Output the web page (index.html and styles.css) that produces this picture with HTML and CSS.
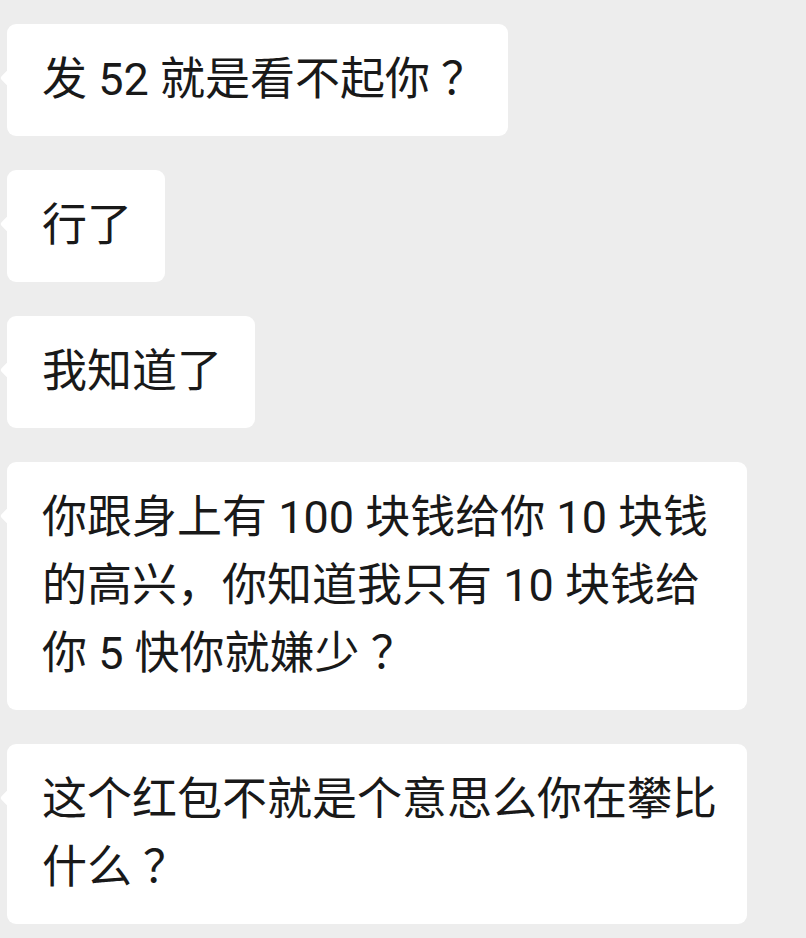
FILE: index.html
```html
<!DOCTYPE html>
<html lang="zh-CN">
<head>
    <meta charset="UTF-8">
    <meta name="viewport" content="width=device-width, initial-scale=1.0">
    <title>聊天记录</title>
    <link rel="stylesheet" href="styles.css">
</head>
<body>
    <!-- 对方发来的消息 -->
    <div class="chat">
        <div class="bubble">发 52 就是看不起你<span class="punct">？</span></div>
        <div class="bubble">行了</div>
        <div class="bubble">我知道了</div>
        <div class="bubble wide">你跟身上有 100 块钱给你 10 块钱<br>的高兴，你知道我只有 10 块钱给<br>你 5 快你就嫌少<span class="punct">？</span></div>
        <div class="bubble wide">这个红包不就是个意思么你在攀比<br>什么<span class="punct">？</span></div>
    </div>
</body>
</html>
```

FILE: styles.css
```css
/* 聊天背景 */
* {
    margin: 0;
    padding: 0;
    box-sizing: border-box;
}

body {
    background-color: #ededed;
    font-family: Roboto, "Noto Sans CJK SC", sans-serif;
    color: #191919;
}

.chat {
    display: flex;
    flex-direction: column;
    align-items: flex-start;
    gap: 34px;
    padding: 24px 0 0 7px;
}

.bubble {
    position: relative;
    background-color: #fff;
    border-radius: 9px;
    padding: 22px 33px 22px 35px;
    font-size: 45px;
    line-height: 68px;
    white-space: nowrap;
}

/* 左侧小尖角 */
.bubble::before {
    content: "";
    position: absolute;
    left: -4px;
    top: 46px;
    width: 16px;
    height: 16px;
    background-color: #fff;
    border-radius: 3px;
    transform: rotate(45deg);
}

/* 全角问号：字形居中 */
.punct {
    line-height: 1;
    padding-left: 11px;
    margin-right: -11px;
}

.wide {
    width: 740px;
}
```
